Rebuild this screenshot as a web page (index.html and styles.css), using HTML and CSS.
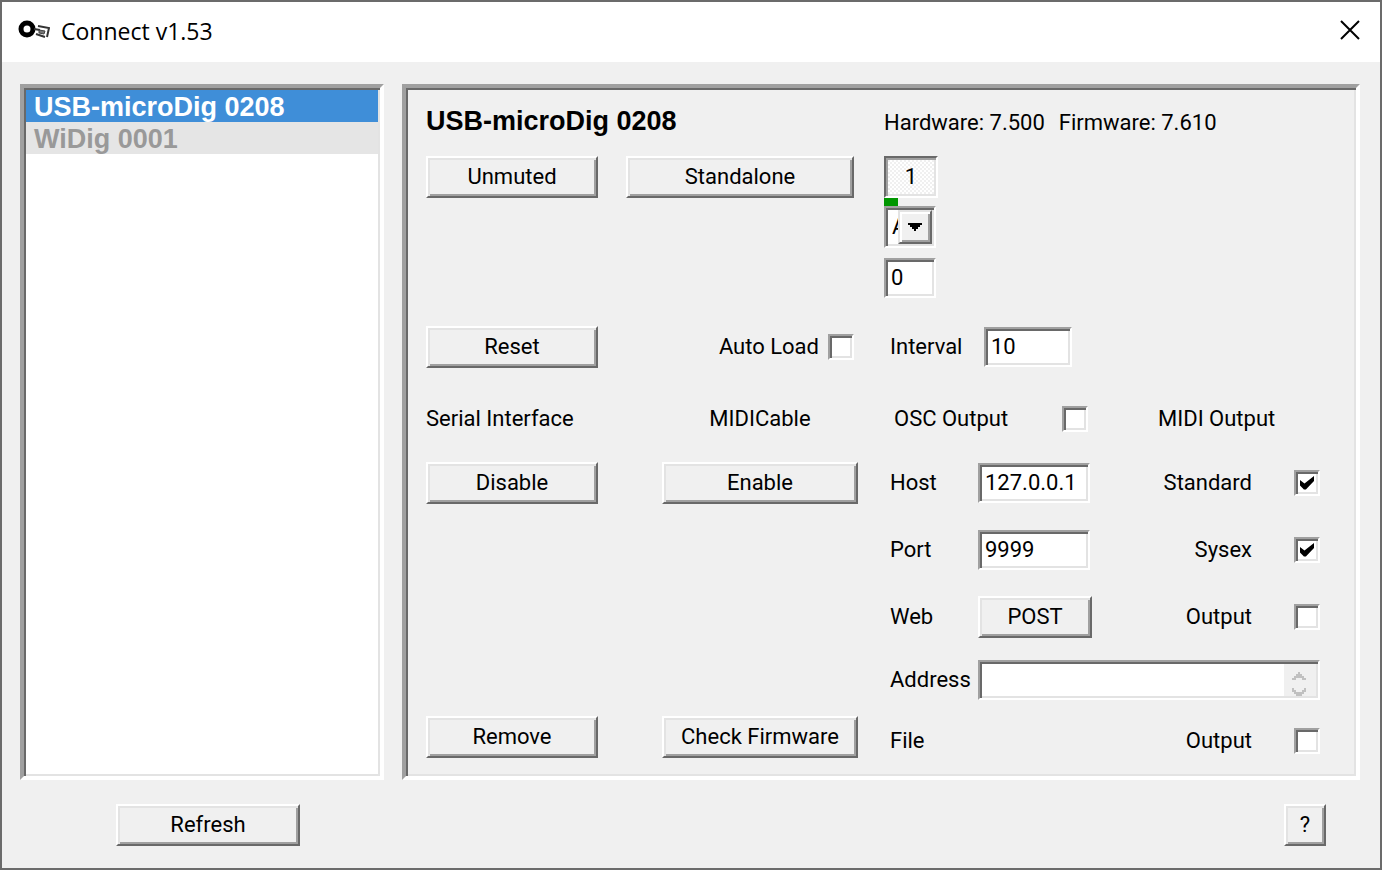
FILE: index.html
```
<!DOCTYPE html>
<html lang="en">
<head>
    <meta charset="UTF-8">
    <meta name="viewport" content="width=device-width, initial-scale=1.0">
    <title>Connect v1.53</title>
    <link rel="stylesheet" href="styles.css">
</head>
<body>
    <header class="titlebar">
        <svg class="logo" width="32" height="20" viewBox="0 0 32 20">
            <circle cx="9" cy="9" r="6" fill="none" stroke="#000" stroke-width="5"/>
            <path d="M16 9l6 1M20 6l11 2-2 9M18 14l9 3" fill="none" stroke="#333" stroke-width="2"/>
            <path d="M21 10l6 1-1 3-5-1z" fill="#777" stroke="#444"/>
        </svg>
        <h1>Connect v1.53</h1>
        <button type="button" class="close" aria-label="Close">
            <svg width="20" height="20" viewBox="0 0 20 20">
                <path d="M1 1l18 18M19 1L1 19" stroke="#000" stroke-width="2"/>
            </svg>
        </button>
    </header>

    <main>
        <!-- device list -->
        <ul class="devices frame" role="listbox" aria-label="Devices">
            <li class="selected" role="option" aria-selected="true">USB-microDig 0208</li>
            <li class="offline" role="option" aria-selected="false">WiDig 0001</li>
        </ul>

        <!-- selected device -->
        <form class="panel frame">
            <h2>USB-microDig 0208</h2>
            <p class="versions"><span>Hardware: 7.500</span><span>Firmware: 7.610</span></p>

            <button type="button" class="btn top">Unmuted</button>
            <button type="button" class="btn top standalone">Standalone</button>
            <div class="channel">
                <button type="button" class="toggle" aria-pressed="true">1</button>
                <div class="meter"></div>
                <div class="combo">
                    <select aria-label="Mode">
                        <option>A</option>
                    </select>
                    <span class="arrow">
                        <svg width="14" height="8" viewBox="0 0 14 8"><path d="M0 0h14v2h-2v2h-2v2H8v2H6V6H4V4H2V2H0z"/></svg>
                    </span>
                </div>
                <input type="text" class="field value" value="0" aria-label="Value">
            </div>

            <button type="button" class="btn">Reset</button>
            <div class="autoload">
                <label for="autoload">Auto Load</label>
                <input type="checkbox" id="autoload">
            </div>
            <div class="interval">
                <label for="interval">Interval</label>
                <input type="text" class="field" id="interval" value="10">
            </div>

            <span>Serial Interface</span>
            <span class="cable">MIDICable</span>
            <div class="osc">
                <label for="osc">OSC Output</label>
                <input type="checkbox" id="osc">
            </div>
            <span>MIDI Output</span>

            <button type="button" class="btn">Disable</button>
            <button type="button" class="btn wide">Enable</button>
            <label class="name" for="host">Host</label>
            <input type="text" class="field" id="host" value="127.0.0.1">
            <div class="output">
                <label for="standard">Standard</label>
                <input type="checkbox" id="standard" checked>
            </div>

            <label class="name" for="port">Port</label>
            <input type="text" class="field" id="port" value="9999">
            <div class="output">
                <label for="sysex">Sysex</label>
                <input type="checkbox" id="sysex" checked>
            </div>

            <span class="name">Web</span>
            <button type="button" class="btn post">POST</button>
            <div class="output">
                <label for="web-output">Output</label>
                <input type="checkbox" id="web-output">
            </div>

            <label class="name" for="address">Address</label>
            <div class="address">
                <textarea id="address" rows="1"></textarea>
                <svg width="32" height="32" viewBox="0 0 32 32" fill="#c0c0c0">
                    <path d="M14 8h2v2h2v2h2v2h2v2h-4v-2h-6v2H8v-2h2v-2h2v-2h2z"/>
                    <path d="M8 24h2v2h2v2h6v-2h2v-2h2v4h-2v2h-2v2h-6v-2h-2v-2H8z"/>
                </svg>
            </div>

            <button type="button" class="btn">Remove</button>
            <button type="button" class="btn wide">Check Firmware</button>
            <span class="name file">File</span>
            <div class="output file">
                <label for="file-output">Output</label>
                <input type="checkbox" id="file-output">
            </div>
        </form>
    </main>

    <footer>
        <button type="button" class="btn refresh">Refresh</button>
        <button type="button" class="btn help">?</button>
    </footer>
</body>
</html>
```
FILE: styles.css
```
* {
    box-sizing: border-box;
}
body {
    margin: 0;
    min-height: 100vh;
    display: flex;
    flex-direction: column;
    border: 2px solid #6b6b6b;
    background: #f0f0f0;
    color: #000;
    font: 22px/28px Roboto, sans-serif;
}
button,
input,
select,
textarea {
    margin: 0;
    padding: 0;
    font: inherit;
    color: inherit;
}
svg {
    display: block;
}

/* title bar */
.titlebar {
    display: flex;
    align-items: center;
    height: 60px;
    padding: 0 20px 4px 16px;
    background: #fff;
}
.titlebar h1 {
    margin: 0 auto 0 11px;
    padding-top: 2px;
    font: 23px/28px "Open Sans", sans-serif;
}
.close {
    border: 0;
    background: none;
}

/* bevels */
.frame {
    margin: 0;
    border: 4px solid;
    border-color: #a0a0a0 #fff #fff #a0a0a0;
    box-shadow: inset 2px 2px #696969, inset -2px -2px #e3e3e3;
}
.btn {
    width: 172px;
    height: 42px;
    border: 2px solid;
    border-color: #fff #696969 #696969 #fff;
    background: #f0f0f0;
    box-shadow: inset 2px 2px #e3e3e3, inset -2px -2px #a0a0a0;
}
.field,
.combo,
.address,
input[type="checkbox"] {
    border: 2px solid;
    border-color: #a0a0a0 #fff #fff #a0a0a0;
    border-radius: 0;
    background: #fff;
    box-shadow: inset 2px 2px #696969, inset -2px -2px #e3e3e3;
}
.field {
    width: 112px;
    height: 40px;
    padding: 0 4px 2px 5px;
}
input[type="checkbox"] {
    appearance: none;
    flex: none;
    width: 26px;
    height: 26px;
}
input[type="checkbox"]:checked::after {
    content: "";
    display: block;
    width: 14px;
    height: 14px;
    margin: 4px;
    background: #000;
    clip-path: polygon(0 28%, 32% 54%, 100% 0, 100% 36%, 42% 96%, 28% 96%, 0 68%);
}

/* layout */
main {
    flex: 1;
    display: flex;
    gap: 18px;
    padding: 22px 20px 0 18px;
}
.devices {
    width: 364px;
    padding: 2px;
    list-style: none;
    background: #fff;
}
.devices li {
    height: 32px;
    padding-left: 8px;
    font: bold 27px/34px "Liberation Sans", sans-serif;
}
.devices .selected {
    background: #3f8ed8;
    color: #fff;
}
.devices .offline {
    background: #e5e5e5;
    color: #999;
}
.panel {
    flex: 1;
    display: grid;
    grid-template-columns: 200px 258px 94px 1fr 162px;
    grid-template-rows: 66px 156px 70px 74px 54px 80px 54px 72px 42px;
    align-items: center;
    padding: 2px 36px 16px 20px;
}

.panel h2 {
    grid-column: 1 / 3;
    margin: 0;
    padding-bottom: 4px;
    font: bold 27px/34px "Liberation Sans", sans-serif;
}
.versions {
    grid-column: 3 / 6;
    display: flex;
    gap: 14px;
    margin: 0;
}
.top {
    align-self: start;
}
.standalone {
    width: 228px;
}
.wide {
    width: 196px;
    margin-left: 36px;
}
.post {
    width: 114px;
}

/* channel column */
.channel {
    grid-column: 3 / 6;
    align-self: start;
}
.toggle {
    display: block;
    width: 54px;
    height: 42px;
    border: 2px solid;
    border-color: #696969 #fff #fff #696969;
    background: repeating-conic-gradient(#fff 0 25%, #f0f0f0 0 50%) 0 0 / 4px 4px;
    box-shadow: inset 2px 2px #a0a0a0, inset -2px -2px #e3e3e3;
}
.meter {
    width: 14px;
    height: 8px;
    background: #009600;
}
.combo {
    position: relative;
    width: 52px;
    height: 42px;
    margin-bottom: 10px;
}
.combo select {
    appearance: none;
    width: 100%;
    height: 100%;
    padding: 0 34px 0 6px;
    border: 0;
    background: none;
}
.arrow {
    position: absolute;
    top: 2px;
    right: 2px;
    bottom: 2px;
    width: 34px;
    display: grid;
    place-items: center;
    border: 2px solid;
    border-color: #e3e3e3 #696969 #696969 #e3e3e3;
    background: #f0f0f0;
    box-shadow: inset 2px 2px #fff, inset -2px -2px #a0a0a0;
    pointer-events: none;
}
.value {
    display: block;
    width: 52px;
}

.autoload {
    display: flex;
    align-items: center;
    justify-content: flex-end;
    gap: 9px;
    padding-right: 30px;
}
.interval {
    grid-column: 3 / 6;
    display: flex;
    align-items: center;
    padding-left: 6px;
}
.interval label {
    width: 94px;
}
.interval .field {
    width: 88px;
}
.cable {
    width: 196px;
    margin-left: 36px;
    text-align: center;
}
.osc {
    grid-column: 3 / 5;
    display: flex;
    align-items: center;
    justify-content: space-between;
    width: 204px;
    padding-left: 10px;
}
.name {
    grid-column: 3;
    padding-left: 6px;
}
.output {
    grid-column: 5;
    display: flex;
    align-items: center;
    justify-content: flex-end;
    gap: 42px;
}
.file {
    padding-top: 8px;
}
.address {
    grid-column: 4 / 6;
    display: flex;
    height: 40px;
    padding: 2px;
}
.address textarea {
    flex: 1;
    min-width: 0;
    border: 0;
    background: #fff;
    resize: none;
    overflow: hidden;
}
.address svg {
    background: #f0f0f0;
}

footer {
    display: flex;
    justify-content: space-between;
    padding: 24px 54px 22px 114px;
}
.refresh {
    width: 184px;
}
.help {
    width: 42px;
}
```
